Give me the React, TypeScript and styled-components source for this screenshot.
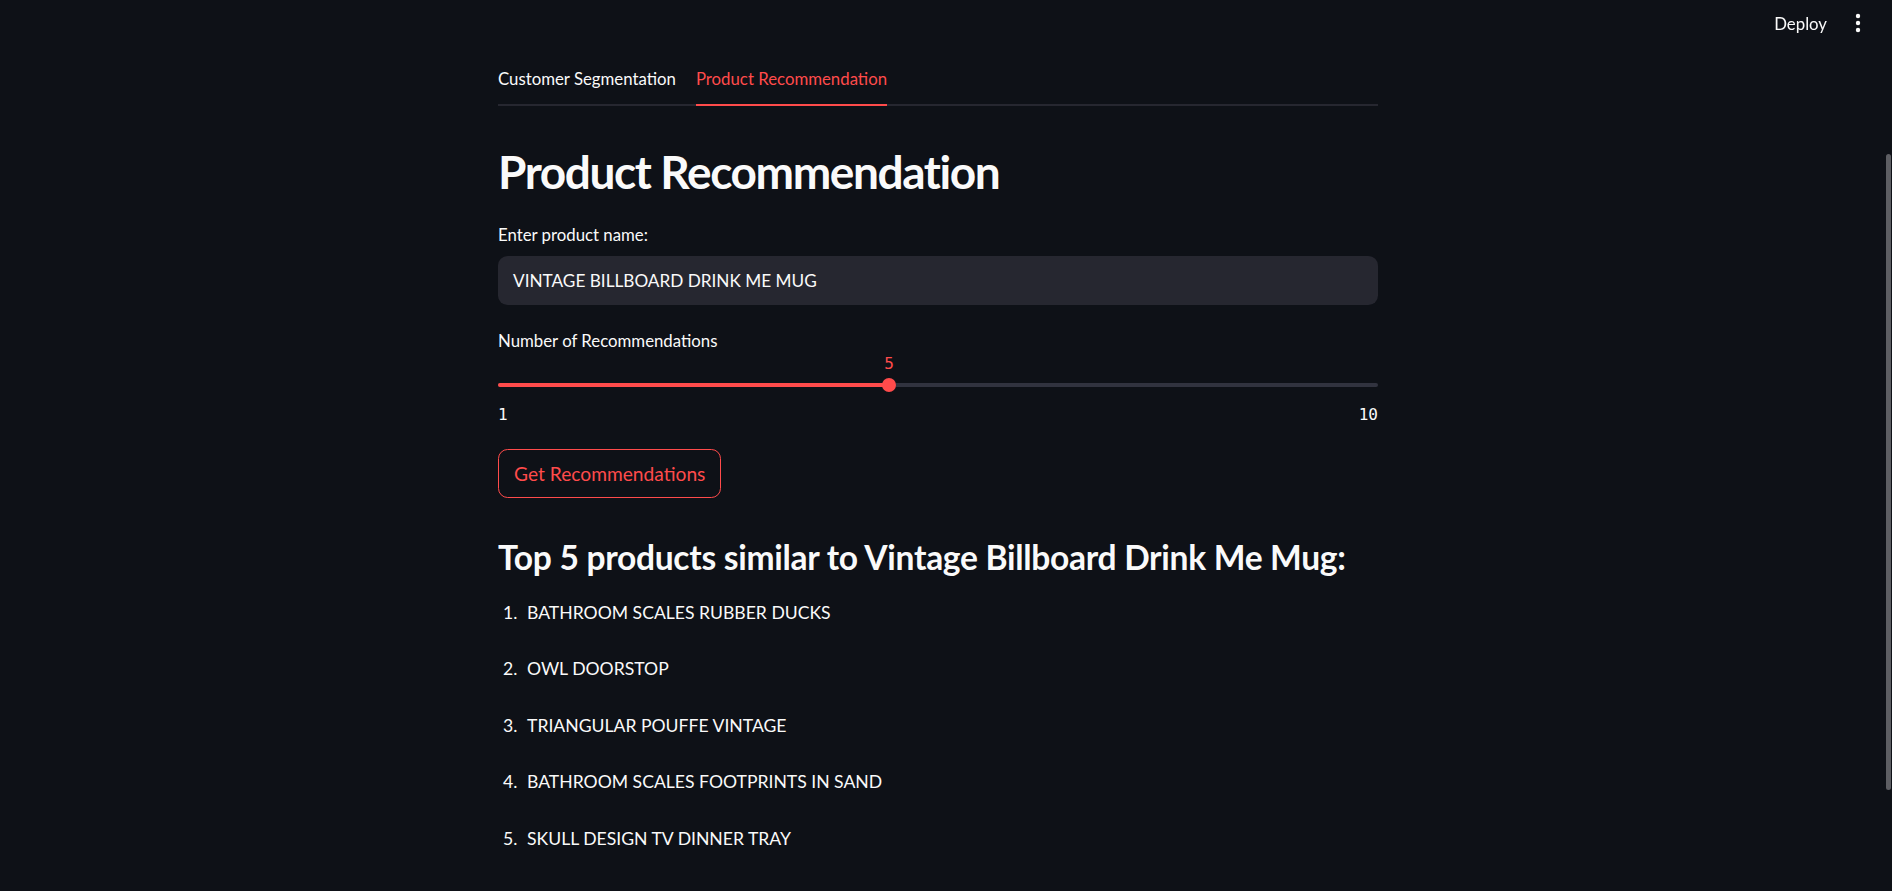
import React from "react";
import styled, { createGlobalStyle } from "styled-components";

const SANS = `Lato, "Noto Sans", sans-serif`;
const MONO = `"DejaVu Sans Mono", "Liberation Mono", monospace`;
const RED = "#ff4b4b";
const TEXT = "#fafafa";

const Global = createGlobalStyle`
  html, body { margin: 0; padding: 0; background: #0e1117; }
  body { font-family: ${SANS}; color: ${TEXT}; overflow: hidden; }
  * { box-sizing: border-box; }
`;

const Page = styled.div`
  width: 100%;
  min-height: 891px;
  background: #0e1117;
  padding-right: 16px;
`;

const Header = styled.header`
  position: fixed;
  top: 0;
  left: 0;
  right: 0;
  height: 46px;
  display: flex;
  align-items: center;
  justify-content: flex-end;
  padding-right: 31px;
  gap: 28px;
  z-index: 5;
`;

const DeployButton = styled.button`
  background: none;
  border: none;
  color: ${TEXT};
  font-family: ${SANS};
  font-size: 16.8px;
  padding: 0;
  cursor: pointer;
`;

const MenuButton = styled.button`
  background: none;
  border: none;
  padding: 0;
  display: flex;
  color: ${TEXT};
`;

const ScrollThumb = styled.div`
  position: fixed;
  right: 1px;
  top: 154px;
  width: 5px;
  height: 636px;
  border-radius: 3px;
  background: #5d5e63;
`;

const Main = styled.main`
  max-width: 880px;
  margin: 0 auto;
  padding-top: 58px;
  display: flex;
  flex-direction: column;
`;

const TabList = styled.div`
  display: flex;
  gap: 20px;
  height: 48px;
  border-bottom: 2.4px solid #262730;
`;

const Tab = styled.div<{ $active?: boolean }>`
  display: flex;
  align-items: center;
  font-size: 16.8px;
  color: ${(p) => (p.$active ? RED : TEXT)};
  margin-bottom: -2.4px;
  padding-bottom: 6px;
  border-bottom: 2.4px solid ${(p) => (p.$active ? RED : "transparent")};
`;

const Title = styled.h1`
  margin: 34px 0 0;
  font-size: 46px;
  font-weight: 700;
  line-height: 63px;
  letter-spacing: -1.4px;
`;

const Label = styled.label<{ $mt: number }>`
  display: block;
  font-size: 16.8px;
  line-height: 20px;
  margin-top: ${(p) => p.$mt}px;
`;

const Input = styled.div`
  margin-top: 11px;
  height: 49px;
  border-radius: 9.6px;
  background: #262730;
  display: flex;
  align-items: center;
  padding: 0 15px;
  font-size: 17.2px;
`;

const Slider = styled.div`
  position: relative;
  height: 85px;
`;

const Track = styled.div`
  position: absolute;
  left: 0;
  right: 0;
  top: 32px;
  height: 4.8px;
  border-radius: 3px;
  background: #31333f;
`;

const Fill = styled.div`
  height: 100%;
  border-radius: 3px;
  background: ${RED};
`;

const Thumb = styled.div`
  position: absolute;
  top: 34.4px;
  width: 14.4px;
  height: 14.4px;
  margin: -7.2px 0 0 -7.2px;
  border-radius: 50%;
  background: ${RED};
`;

const ThumbValue = styled.div`
  position: absolute;
  top: 3px;
  transform: translateX(-50%);
  font-family: ${MONO};
  font-size: 16px;
  color: ${RED};
`;

const TickRow = styled.div`
  position: absolute;
  left: 0;
  right: 0;
  top: 54px;
  display: flex;
  justify-content: space-between;
  font-family: ${MONO};
  font-size: 16px;
`;

const Button = styled.button`
  align-self: flex-start;
  margin-top: 13px;
  height: 49px;
  padding: 0 15px;
  border: 1.2px solid ${RED};
  border-radius: 9.6px;
  background: transparent;
  color: ${RED};
  font-family: ${SANS};
  font-size: 19.2px;
`;

const Subtitle = styled.h3`
  margin: 39px 0 0;
  font-size: 33.6px;
  font-weight: 700;
  line-height: 40px;
  letter-spacing: -0.3px;
`;

const ResultList = styled.ol`
  list-style: none;
  margin: 22px 0 0;
  padding: 0;
  display: flex;
  flex-direction: column;
  gap: 28.6px;
`;

const ResultItem = styled.li`
  display: flex;
  font-size: 17.6px;
  line-height: 28px;
`;

const ItemNumber = styled.span`
  width: 29px;
  padding-left: 5px;
`;

const min = 1;
const max = 10;
const value = 5;
const pct = ((value - min) / (max - min)) * 100;

const results = [
  "BATHROOM SCALES RUBBER DUCKS",
  "OWL DOORSTOP",
  "TRIANGULAR POUFFE VINTAGE",
  "BATHROOM SCALES FOOTPRINTS IN SAND",
  "SKULL DESIGN TV DINNER TRAY",
];

export default function App() {
  return (
    <Page>
      <Global />
      <Header>
        <DeployButton>Deploy</DeployButton>
        <MenuButton aria-label="menu">
          <svg width="6" height="20" viewBox="0 0 6 20">
            <circle cx="3" cy="3" r="2.2" fill="#fafafa" />
            <circle cx="3" cy="10" r="2.2" fill="#fafafa" />
            <circle cx="3" cy="17" r="2.2" fill="#fafafa" />
          </svg>
        </MenuButton>
      </Header>
      <ScrollThumb />
      <Main>
        <TabList>
          <Tab>Customer Segmentation</Tab>
          <Tab $active>Product Recommendation</Tab>
        </TabList>
        <Title>Product Recommendation</Title>
        <Label $mt={21.5}>Enter product name:</Label>
        <Input>VINTAGE BILLBOARD DRINK ME MUG</Input>
        <Label $mt={26}>Number of Recommendations</Label>
        <Slider>
          <Track>
            <Fill style={{ width: `${pct}%` }} />
          </Track>
          <ThumbValue style={{ left: `${pct}%` }}>{value}</ThumbValue>
          <Thumb style={{ left: `${pct}%` }} />
          <TickRow>
            <span>{min}</span>
            <span>{max}</span>
          </TickRow>
        </Slider>
        <Button>Get Recommendations</Button>
        <Subtitle>Top 5 products similar to Vintage Billboard Drink Me Mug:</Subtitle>
        <ResultList>
          {results.map((r, i) => (
            <ResultItem key={r}>
              <ItemNumber>{i + 1}.</ItemNumber>
              <span>{r}</span>
            </ResultItem>
          ))}
        </ResultList>
      </Main>
    </Page>
  );
}
